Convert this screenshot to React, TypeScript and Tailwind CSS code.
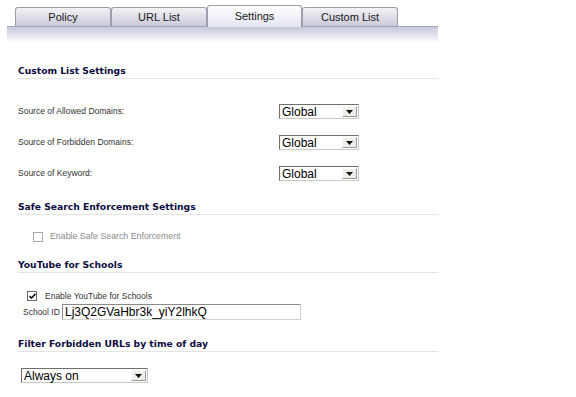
const TABS = ['Policy', 'URL List', 'Settings', 'Custom List']

function Tab({ label, active }: { label: string; active?: boolean }) {
  if (active) {
    return (
      <div className="w-[95px] h-[22px] -mb-px flex items-center justify-center rounded-t-[3px] border border-b-0 border-[#9d9dab] bg-gradient-to-b from-white to-[#e4e5f0] text-[11px] text-[#1a1a1a] z-10">
        {label}
      </div>
    )
  }
  return (
    <div className="w-[96px] h-[19px] flex items-center justify-center rounded-t-[3px] border border-b-0 border-[#9d9dab] bg-gradient-to-b from-[#f3f3f6] to-[#c9cad9] text-[11px] text-[#1a1a1a]">
      {label}
    </div>
  )
}

function Heading({ children, className = '' }: { children: React.ReactNode; className?: string }) {
  return (
    <div
      className={`h-[15px] leading-[14px] border-b border-[#e4e4e4] text-[9.2px] font-bold text-[#0c0c40] ${className}`}
      style={{ fontFamily: '"DejaVu Sans", Verdana, sans-serif' }}
    >
      {children}
    </div>
  )
}

function Select({ value, width, height = 15 }: { value: string; width: string; height?: number }) {
  return (
    <div
      className={`${width} flex items-stretch border border-t-[#6f6f6f] border-l-[#6f6f6f] border-r-[#c9c9c9] border-b-[#c9c9c9] bg-white`}
      style={{ height }}
    >
      <span className="flex-1 leading-none flex items-center pl-[2px] text-[12px] text-black">{value}</span>
      <span className="w-[15px] my-[1px] mr-[1px] flex items-center justify-center bg-[#eeede8] border border-t-white border-l-white border-r-[#9a9a9a] border-b-[#9a9a9a]">
        <svg width="7" height="4" viewBox="0 0 7 4">
          <path d="M0 0h7L3.5 4z" fill="#111" />
        </svg>
      </span>
    </div>
  )
}

function Row({ label }: { label: string }) {
  return (
    <div className="h-[31px] flex items-center">
      <span className="w-[261px] text-[8.5px] text-[#333]">{label}</span>
      <Select value="Global" width="w-[80px]" />
    </div>
  )
}

export default function App() {
  return (
    <div className="w-[576px] h-[397px] bg-white overflow-hidden" style={{ fontFamily: '"Liberation Sans", Arial, sans-serif' }}>
      <div className="h-[26px] pl-[15px] flex items-end">
        {TABS.map((t) => (
          <Tab key={t} label={t} active={t === 'Settings'} />
        ))}
      </div>
      <div className="ml-[7px] w-[431px] h-[17px] border-t border-[#a4a5b9] bg-gradient-to-b from-[#c6c8dc] to-white" />

      <div className="pl-[18px] w-[438px] flex flex-col">
        <Heading className="mt-[21px]">Custom List Settings</Heading>

        <div className="mt-[17px]">
          <Row label="Source of Allowed Domains:" />
          <Row label="Source of Forbidden Domains:" />
          <Row label="Source of Keyword:" />
        </div>

        <Heading className="mt-[11px]">Safe Search Enforcement Settings</Heading>

        <div className="mt-[12px] h-[20px] flex items-center pl-[15px]">
          <span className="w-[10px] h-[10px] border border-[#a9a9a9] bg-white" />
          <span className="ml-[7px] text-[8.8px] text-[#8a8a8a]">Enable Safe Search Enforcement</span>
        </div>

        <Heading className="mt-[11px]">YouTube for Schools</Heading>

        <div className="mt-[16px] h-[14px] flex items-center pl-[9px]">
          <span className="w-[10px] h-[10px] border border-[#6a6a6a] bg-white flex items-center justify-center">
            <svg width="7" height="6" viewBox="0 0 7 6">
              <path d="M0.5 3l2 2L6.5 0.8" stroke="#111" strokeWidth="1.6" fill="none" />
            </svg>
          </span>
          <span className="ml-[8px] text-[8.5px] text-[#333]">Enable YouTube for Schools</span>
        </div>

        <div className="mt-[1px] h-[16px] flex items-center pl-[5px]">
          <span className="w-[39px] text-[8.5px] text-[#333]">School ID</span>
          <div className="w-[239px] h-[16px] flex items-center pl-[2px] border border-t-[#8a8a8a] border-l-[#8a8a8a] border-r-[#d0d0d0] border-b-[#d0d0d0] text-[12px] text-black">
            Lj3Q2GVaHbr3k_yiY2lhkQ
          </div>
        </div>

        <Heading className="mt-[17px]">Filter Forbidden URLs by time of day</Heading>

        <div className="mt-[16px] pl-[3px]">
          <Select value="Always on" width="w-[127px]" height={15} />
        </div>
      </div>
    </div>
  )
}
